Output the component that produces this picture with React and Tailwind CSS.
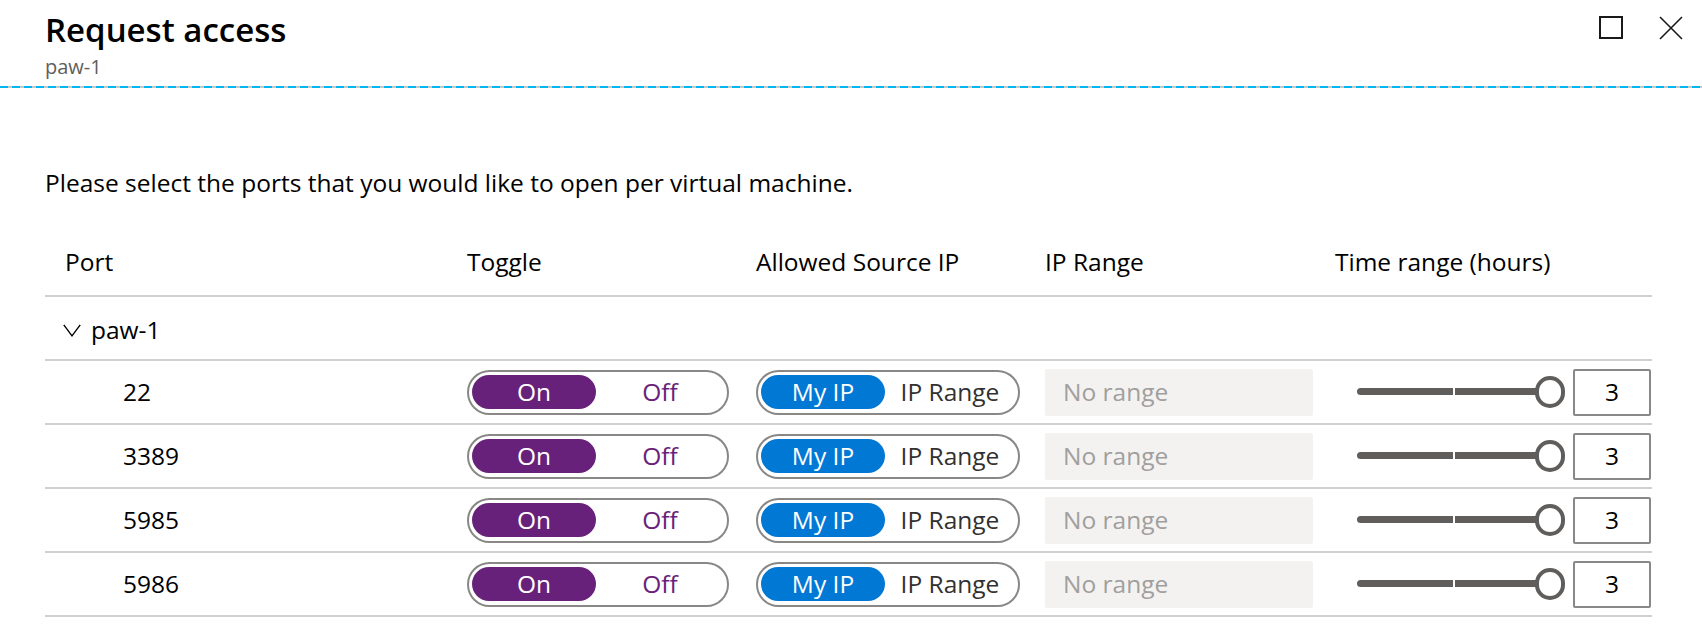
const ports = ['22', '3389', '5985', '5986'];

function Pill({ left, right, fill, rightColor }) {
  return (
    <div className="flex items-center h-[45px] rounded-full border-2 border-[#8a8886] px-[3px]">
      <div className={`w-[124px] h-[34px] rounded-full flex items-center justify-center text-white ${fill}`}>
        {left}
      </div>
      <div className={`flex-1 text-center ${rightColor}`}>{right}</div>
    </div>
  );
}

function Slider() {
  return (
    <div className="relative w-[208px] h-[32px]">
      <div className="absolute left-0 top-[12px] h-[7px] w-[96px] rounded-l-full bg-[#605e5c]" />
      <div className="absolute left-[98px] top-[12px] h-[7px] w-[85px] bg-[#605e5c]" />
      <div className="absolute right-0 top-0 w-[30px] h-[32px] rounded-full border-[4px] border-[#605e5c] bg-white" />
    </div>
  );
}

export default function App() {
  return (
    <div className="w-[1702px] h-[634px] bg-white text-black overflow-hidden" style={{ fontFamily: '"Open Sans", "Noto Sans", sans-serif' }}>
      {/* header */}
      <div className="flex justify-between pl-[45px] pr-[19px]">
        <div className="pt-[10px]">
          <h1 className="text-[33px] leading-[40px] font-semibold">Request access</h1>
          <div className="mt-[5px] text-[20px] leading-[23px] text-[#605e5c]">paw-1</div>
        </div>
        <div className="flex gap-[36px] pt-[16px]">
          <svg width="24" height="24" viewBox="0 0 24 24">
            <rect x="1" y="1" width="22" height="21" fill="none" stroke="#1b1a19" strokeWidth="2" />
          </svg>
          <svg width="24" height="24" viewBox="0 0 24 24">
            <path d="M1 1 L23 23 M23 1 L1 23" fill="none" stroke="#1b1a19" strokeWidth="1.6" />
          </svg>
        </div>
      </div>
      <div className="mt-[8px] h-[2px] w-full bg-[repeating-linear-gradient(90deg,#00b7f1_0_8px,#c8c8c8_8px_12px)]" />

      <div className="px-[45px] pr-[50px] text-[24.5px] leading-[30px]">
        <p className="mt-[80px]">
          Please select the ports that you would like to open per virtual machine.
        </p>

        {/* table header */}
        <div className="mt-[49px] grid grid-cols-[422px_289px_289px_290px_1fr] border-b-2 border-[#d2d0ce] pb-[18px]">
          <div className="pl-[20px]">Port</div>
          <div>Toggle</div>
          <div>Allowed Source IP</div>
          <div>IP Range</div>
          <div>Time range (hours)</div>
        </div>

        {/* group row */}
        <div className="h-[64px] flex items-center border-b-2 border-[#d2d0ce] pl-[18px] pt-[4px]">
          <svg width="18" height="13" viewBox="0 0 18 13" className="mr-[10px]">
            <polyline points="0.8,0.8 9,11.8 17.2,0.8" fill="none" stroke="#000" strokeWidth="1.4" />
          </svg>
          <span>paw-1</span>
        </div>

        {ports.map((p) => (
          <div key={p} className="h-[64px] grid grid-cols-[422px_289px_289px_290px_1fr] items-center border-b-2 border-[#d2d0ce]">
            <div className="pl-[78px]">{p}</div>
            <div className="pr-[27px]">
              <Pill left="On" right="Off" fill="bg-[#68217a]" rightColor="text-[#68217a]" />
            </div>
            <div className="pr-[25px]">
              <Pill left="My IP" right="IP Range" fill="bg-[#0078d4]" rightColor="text-[#323130]" />
            </div>
            <div className="pr-[22px]">
              <div className="h-[47px] rounded-[2px] bg-[#f3f2f1] pl-[18px] flex items-center text-[#a19f9d]">No range</div>
            </div>
            <div className="flex items-center pl-[22px] gap-[8px]">
              <Slider />
              <div className="w-[78px] h-[47px] rounded-[2px] border-2 border-[#8a8886] flex items-center justify-center">3</div>
            </div>
          </div>
        ))}
      </div>
    </div>
  );
}
